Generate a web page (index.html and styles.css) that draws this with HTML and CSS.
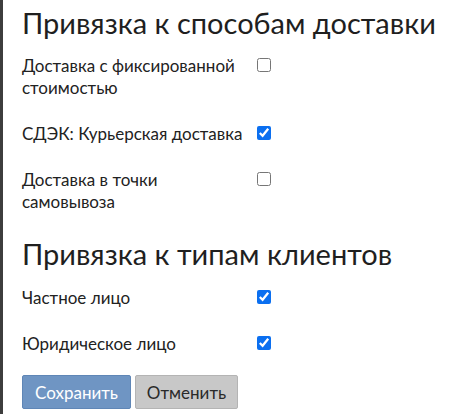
FILE: index.html
```html
<!DOCTYPE html>
<html lang="ru">
<head>
<meta charset="utf-8">
<link rel="stylesheet" href="styles.css">
</head>
<body>
<div class="page">
  <h2 class="title">Привязка к способам доставки</h2>
  <div class="row">
    <label class="label" for="d1">Доставка с фиксированной стоимостью</label>
    <input class="check" type="checkbox" id="d1">
  </div>
  <div class="row">
    <label class="label" for="d2">СДЭК: Курьерская доставка</label>
    <input class="check" type="checkbox" id="d2" checked>
  </div>
  <div class="row">
    <label class="label" for="d3">Доставка в точки самовывоза</label>
    <input class="check" type="checkbox" id="d3">
  </div>
  <h2 class="title title-second">Привязка к типам клиентов</h2>
  <div class="row">
    <label class="label" for="c1">Частное лицо</label>
    <input class="check" type="checkbox" id="c1" checked>
  </div>
  <div class="row">
    <label class="label" for="c2">Юридическое лицо</label>
    <input class="check" type="checkbox" id="c2" checked>
  </div>
  <div class="actions">
    <button class="btn btn-save" type="button">Сохранить</button>
    <button class="btn btn-cancel" type="button">Отменить</button>
  </div>
</div>
</body>
</html>
```

FILE: styles.css
```css
html, body {
  margin: 0;
  padding: 0;
  background: #ffffff;
}
body {
  font-family: Lato, "Open Sans", "Liberation Sans", sans-serif;
  color: #222222;
  min-height: 414px;
  border-left: 3px solid #3d3d3d;
  box-sizing: border-box;
}
.page {
  padding: 6px 0 0 19px;
}
.title {
  margin: 0 0 15px 0;
  font-size: 29px;
  line-height: 34px;
  font-weight: 400;
  color: #1f1f1f;
}
.title-second {
  margin-top: 22px;
  margin-bottom: 16px;
}
.row {
  display: flex;
  align-items: flex-start;
  margin-bottom: 24px;
}
.label {
  width: 226px;
  font-size: 17px;
  line-height: 22px;
}
.check {
  margin: 3px 0 0 9px;
  width: 14px;
  height: 14px;
  accent-color: #0b6ff0;
}
.actions {
  display: flex;
  gap: 4px;
  margin-top: -4px;
}
.btn {
  font-family: Lato, "Open Sans", "Liberation Sans", sans-serif;
  font-size: 17px;
  height: 34px;
  padding: 0 8px;
  border-radius: 2px;
  cursor: pointer;
}
.btn-save {
  width: 109px;
  background: #6f95c3;
  border: 1px solid #5f86b6;
  color: #ffffff;
}
.btn-cancel {
  width: 103px;
  background: #c8c8c8;
  border: 1px solid #b4b4b4;
  color: #2a2a2a;
}
```
